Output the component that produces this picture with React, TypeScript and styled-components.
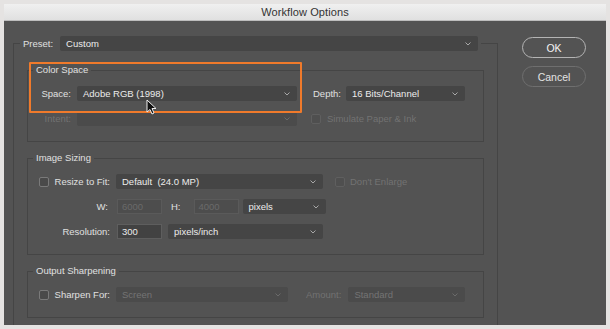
import React from "react";
import styled, { createGlobalStyle } from "styled-components";

const Global = createGlobalStyle`
  html, body { margin: 0; padding: 0; background: #e5e3e2; }
  body { font-family: "Liberation Sans", Arial, sans-serif; }
  * { box-sizing: border-box; }
`;

const Page = styled.div`
  width: 610px;
  height: 329px;
  padding: 4px 4px 0 4px;
  background: #e5e3e2;
`;

const Window = styled.div`
  position: relative;
  width: 602px;
  height: 321px;
  display: flex;
  flex-direction: column;
  overflow: hidden;
`;

const TitleBar = styled.div`
  height: 17px;
  flex: none;
  display: flex;
  align-items: center;
  justify-content: center;
  background: linear-gradient(#f0f0f0, #e0e0e0);
  border-bottom: 1px solid #bdbdbd;
  color: #333333;
  font-size: 11px;
  letter-spacing: 0.1px;
`;

const Body = styled.div`
  flex: 1;
  display: flex;
  align-items: flex-start;
  padding: 15px 0 0 9px;
  background: #535353;
  overflow: hidden;
`;

const MainBox = styled.fieldset`
  width: 485px;
  min-width: 0;
  margin: 0;
  padding: 13px 0 20px 0;
  border: 1px solid #454545;
  display: flex;
  flex-direction: column;
  gap: 10px;
`;

const PresetLegend = styled.legend`
  margin-left: 6px;
  padding: 0 3px;
  display: flex;
  align-items: center;
  gap: 7px;
`;

const Group = styled.fieldset`
  min-width: 0;
  margin: 0 13px;
  padding: 10px 0 15px 0;
  border: 1px solid #454545;
  display: flex;
  flex-direction: column;
  gap: 10px;
`;

const GroupTitle = styled.legend`
  margin-left: 5px;
  padding: 0 3px;
  line-height: 12px;
  font-size: 9.5px;
  color: #e0e0e0;
  white-space: pre;
`;

const Row = styled.div`
  height: 15px;
  display: flex;
  align-items: center;
`;

const Label = styled.span<{ $w?: number; $dim?: boolean; $gap?: number }>`
  ${(p) => (p.$w ? `width: ${p.$w}px; flex: none;` : "")}
  display: inline-flex;
  align-items: center;
  justify-content: flex-end;
  gap: 6px;
  margin-right: ${(p) => p.$gap ?? 6}px;
  font-size: 9.5px;
  color: ${(p) => (p.$dim ? "#727272" : "#e0e0e0")};
  white-space: pre;
`;

const Spacer = styled.span<{ $w: number }>`
  width: ${(p) => p.$w}px;
  flex: none;
`;

const SelectBox = styled.div<{ $w: number; $dim?: boolean }>`
  width: ${(p) => p.$w}px;
  height: 15px;
  flex: none;
  display: flex;
  align-items: center;
  justify-content: space-between;
  padding: 0 7px 0 6px;
  background: ${(p) => (p.$dim ? "#4b4b4b" : "#454545")};
  border-radius: 2px;
  font-size: 9.5px;
  color: ${(p) => (p.$dim ? "#747474" : "#ececec")};
  white-space: pre;
`;

const InputBox = styled.div<{ $dim?: boolean }>`
  width: 45px;
  height: 15px;
  flex: none;
  display: flex;
  align-items: center;
  padding-left: 4px;
  background: ${(p) => (p.$dim ? "#4d4d4d" : "#424242")};
  border: 1px solid ${(p) => (p.$dim ? "#5a5a5a" : "#5e5e5e")};
  font-size: 9.5px;
  color: ${(p) => (p.$dim ? "#6a6a6a" : "#ececec")};
`;

const Check = styled.span<{ $dim?: boolean }>`
  width: 10px;
  height: 10px;
  flex: none;
  border-radius: 2px;
  border: 1px solid ${(p) => (p.$dim ? "#5f5f5f" : "#7a7a7a")};
  background: ${(p) => (p.$dim ? "#4f4f4f" : "#4a4a4a")};
`;

const ButtonColumn = styled.div`
  margin-left: 24px;
  padding-top: 1px;
  display: flex;
  flex-direction: column;
  gap: 8px;
`;

const PillButton = styled.div<{ $primary?: boolean }>`
  width: 64px;
  height: 21px;
  display: flex;
  align-items: center;
  justify-content: center;
  border-radius: 11px;
  border: 1px solid ${(p) => (p.$primary ? "#b4b4b4" : "#6f6f6f")};
  color: ${(p) => (p.$primary ? "#f4f4f4" : "#e4e4e4")};
  font-size: 10.5px;
`;

const Highlight = styled.div`
  position: absolute;
  left: 25px;
  top: 58px;
  width: 273px;
  height: 51px;
  border: 2px solid #f07a2b;
  border-radius: 1px;
  pointer-events: none;
`;

const Cursor = styled.svg`
  position: absolute;
  left: 142px;
  top: 95px;
`;

const Chevron = ({ dim }: { dim?: boolean }) => (
  <svg width="6" height="4" viewBox="0 0 6 4">
    <path d="M0.5 0.5 L3 3 L5.5 0.5" fill="none" stroke={dim ? "#6a6a6a" : "#a8a8a8"} strokeWidth="1" />
  </svg>
);

const Select = ({ w, text = "", dim }: { w: number; text?: string; dim?: boolean }) => (
  <SelectBox $w={w} $dim={dim}>
    <span>{text}</span>
    <Chevron dim={dim} />
  </SelectBox>
);

export default function App() {
  return (
    <Page>
      <Global />
      <Window>
        <TitleBar>Workflow Options</TitleBar>
        <Body>
          <MainBox>
            <PresetLegend>
              <Label $gap={0}>Preset:</Label>
              <Select w={418} text="Custom" />
            </PresetLegend>

            <Group>
              <GroupTitle>Color Space</GroupTitle>
              <Row>
                <Label $w={43}>Space:</Label>
                <Select w={220} text="Adobe RGB (1998)" />
                <Spacer $w={16} />
                <Label $gap={5}>Depth:</Label>
                <Select w={119} text="16 Bits/Channel" />
              </Row>
              <Row>
                <Label $w={43} $dim>Intent:</Label>
                <Select w={220} dim />
                <Spacer $w={14} />
                <Check $dim />
                <Spacer $w={6} />
                <Label $dim>Simulate Paper &amp; Ink</Label>
              </Row>
            </Group>

            <Group>
              <GroupTitle>Image Sizing</GroupTitle>
              <Row>
                <Label $w={82}>
                  <Check />
                  Resize to Fit:
                </Label>
                <Select w={207} text="Default  (24.0 MP)" />
                <Spacer $w={12} />
                <Check $dim />
                <Spacer $w={5} />
                <Label $dim>Don't Enlarge</Label>
              </Row>
              <Row>
                <Label $w={80} $gap={9}>W:</Label>
                <InputBox $dim>6000</InputBox>
                <Spacer $w={9} />
                <Label $gap={13}>H:</Label>
                <InputBox $dim>4000</InputBox>
                <Spacer $w={4} />
                <Select w={83} text="pixels" />
              </Row>
              <Row>
                <Label $w={82} $gap={7}>Resolution:</Label>
                <InputBox>300</InputBox>
                <Spacer $w={6} />
                <Select w={155} text="pixels/inch" />
              </Row>
            </Group>

            <Group>
              <GroupTitle>Output Sharpening</GroupTitle>
              <Row>
                <Label $w={82}>
                  <Check />
                  Sharpen For:
                </Label>
                <Select w={172} text="Screen" dim />
                <Spacer $w={18} />
                <Label $dim $gap={7}>Amount:</Label>
                <Select w={117} text="Standard" dim />
              </Row>
            </Group>
          </MainBox>

          <ButtonColumn>
            <PillButton $primary>OK</PillButton>
            <PillButton>Cancel</PillButton>
          </ButtonColumn>
        </Body>
        <Highlight />
        <Cursor width="11" height="17" viewBox="0 0 11 17">
          <path d="M1 1 L1 13 L4 10.5 L6 15 L8 14 L6 9.5 L10 9.5 Z" fill="#111" stroke="#eee" strokeWidth="1" strokeLinejoin="round" />
        </Cursor>
      </Window>
    </Page>
  );
}
